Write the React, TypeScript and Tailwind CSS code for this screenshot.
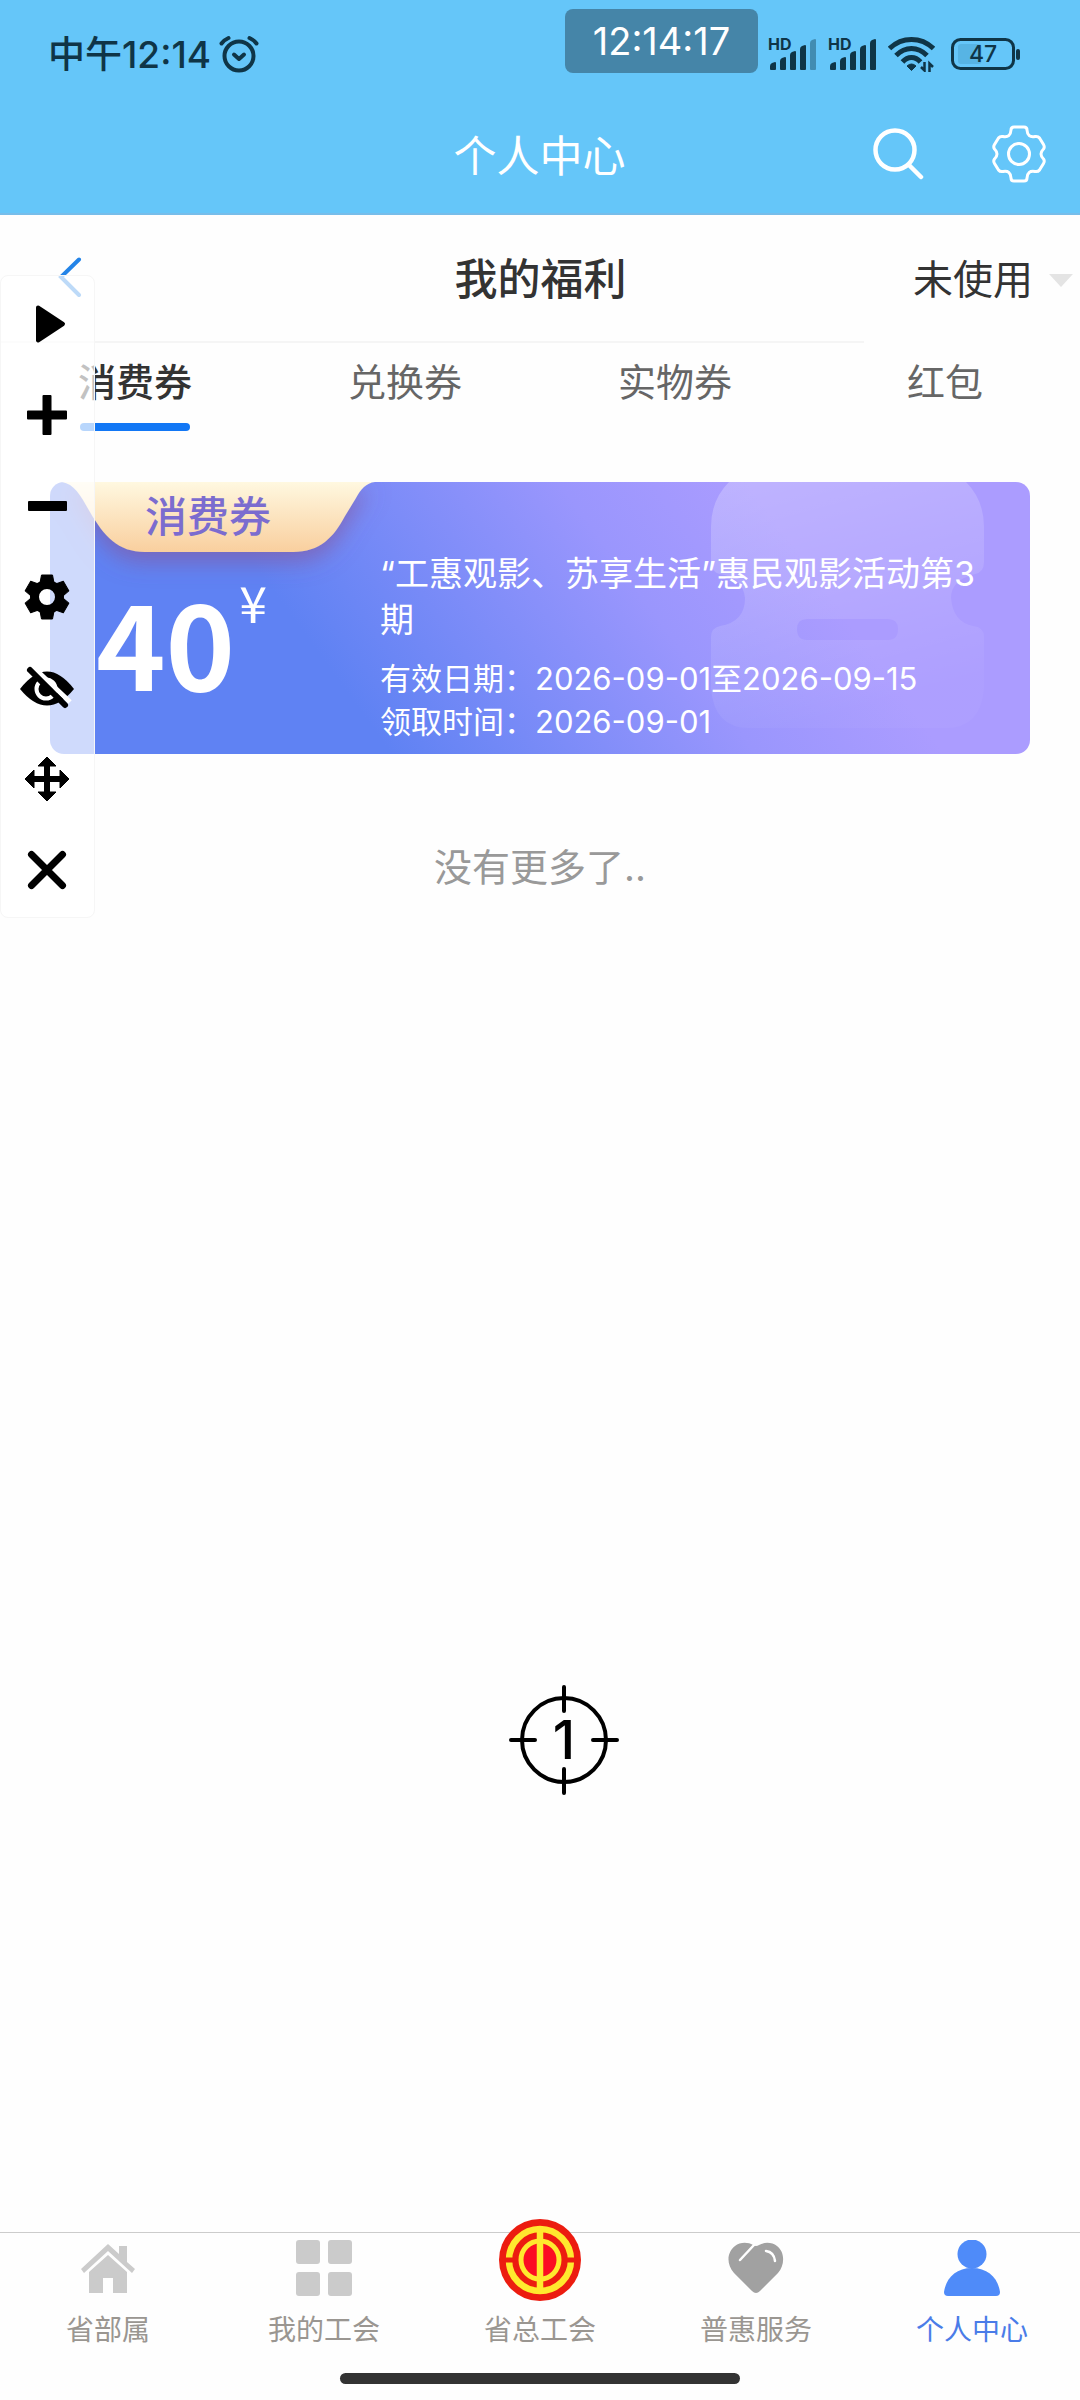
import { useState } from "react";
import type { ReactNode } from "react";
import clsx from "clsx";

const TABS = ["消费券", "兑换券", "实物券", "红包"];

const STATUS_OPTIONS = ["未使用", "已使用", "已过期"];

function AlarmIcon() {
  return (
    <svg width="40" height="38" viewBox="0 0 40 38" fill="none" stroke="#0f3547" strokeWidth="4" strokeLinecap="round">
      <circle cx="20" cy="21" r="14.5" />
      <path d="M15 19.5l5 4.5 5-4.5" strokeLinejoin="round" />
      <path d="M2.5 8.5Q5 5 9.5 3M37.5 8.5Q35 5 30.5 3" />
    </svg>
  );
}

function SignalIcon({ level }: { level: number }) {
  const heights = [8, 13, 19, 25, 31];
  return (
    <svg
      className="overflow-visible"
      width="51"
      height="38"
      viewBox="0 -2 51 38"
      fill="#0f3547"
      aria-label="HD"
    >
      <text x="0" y="13" fontSize="16" fontWeight="700" fontFamily="Inter, sans-serif">
        HD
      </text>
      {heights.map((h, i) => (
        <path
          key={h}
          d={`M${2 + i * 10} ${37 - h}q0 -2 2 -3l3 -1q1 0 1 1V32q0 1 -1 1h-4q-1 0 -1 -1z`}
          opacity={i < level ? 1 : 0.4}
        />
      ))}
    </svg>
  );
}

function WifiIcon() {
  return (
    <svg width="47" height="36" viewBox="0 0 47 36" fill="none" stroke="#0f3547" strokeWidth="5">
      <path d="M1.5 12.5Q11 3.5 23.5 3.5T45.5 12.5" />
      <path d="M8 19.5Q15 12.5 23.5 12.5T39 19.5" />
      <path d="M14.5 26Q18.5 21.5 23.5 21.5T32.5 26" />
      <path d="M19 30q4.5 -4 9 0l-4.5 4.5z" fill="#0f3547" strokeWidth="1" strokeLinejoin="round" />
      <path d="M36.5 26v8.5l-3.5 -3.5M41.5 36v-8.5l3.5 3.5" strokeWidth="2.5" />
    </svg>
  );
}

function BatteryIcon({ percent }: { percent: number }) {
  return (
    <svg width="70" height="32" viewBox="0 0 70 32" aria-label="battery">
      <rect x="1.5" y="1.5" width="61" height="29" rx="8" fill="none" stroke="#0f3547" strokeWidth="3" />
      <rect x="7" y="6" width={(50 * percent) / 100} height="20" rx="3" fill="#57b4e4" />
      <rect x="65" y="11" width="4" height="11" rx="2" fill="#0f3547" />
      <text x="32" y="24" textAnchor="middle" fontSize="23" fontWeight="500" fontFamily="Inter, sans-serif" fill="#0f3547">
        {percent}
      </text>
    </svg>
  );
}

function SearchIcon() {
  return (
    <svg width="52" height="52" viewBox="0 0 52 52" fill="none" stroke="white" strokeWidth="4.5" strokeLinecap="round">
      <circle cx="22" cy="22" r="19.5" />
      <path d="M36 37l12 12" />
    </svg>
  );
}

function SettingsIcon() {
  return (
    <svg width="56" height="58" viewBox="-28 -29 56 58" fill="none" stroke="white" strokeWidth="3" strokeLinejoin="round">
      <path d="M-5 -27H5Q8 -27 8 -24Q8.5 -16 16 -17.5Q19 -18 20.5 -16L24.5 -9.5Q26 -7 24.5 -5Q19.5 0 24.5 5Q26 7 24.5 9.5L20.5 16Q19 18 16 17.5Q8.5 16 8 24Q8 27 5 27H-5Q-8 27 -8 24Q-8.5 16 -16 17.5Q-19 18 -20.5 16L-24.5 9.5Q-26 7 -24.5 5Q-19.5 0 -24.5 -5Q-26 -7 -24.5 -9.5L-20.5 -16Q-19 -18 -16 -17.5Q-8.5 -16 -8 -24Q-8 -27 -5 -27Z" />
      <circle r="10.5" />
    </svg>
  );
}

function ToolIcon({ children }: { children: ReactNode }) {
  return (
    <svg width="60" height="60" viewBox="-30 -30 60 60" fill="black" stroke="black" strokeLinejoin="round">
      {children}
    </svg>
  );
}

const TOOLS = [
  {
    label: "play",
    icon: <path d="M-9 -16.5L16 0L-9 16.5Z" strokeWidth="4" />,
  },
  {
    label: "add",
    icon: <path d="M-3.5 -19h7v15.5h15.5v7h-15.5v15.5h-7v-15.5h-15.5v-7h15.5z" strokeWidth="2" />,
  },
  {
    label: "remove",
    icon: <rect x="-18" y="-4" width="37" height="8" strokeWidth="2" />,
  },
  {
    label: "settings",
    icon: (
      <>
        <circle r="12.5" fill="none" strokeWidth="9" />
        {[0, 60, 120, 180, 240, 300].map((deg) => (
          <path key={deg} transform={`rotate(${deg})`} d="M-7 -14L-5.5 -22H5.5L7 -14Z" strokeWidth="1" />
        ))}
      </>
    ),
  },
  {
    label: "hide",
    icon: (
      <>
        <path d="M-27 1Q0 -34 27 1Q0 34 -27 1Z" stroke="none" />
        <circle r="9.5" cy="1" cx="-1" fill="none" stroke="white" strokeWidth="4" />
        <path d="M-14 -21L23 14" stroke="white" strokeWidth="5" />
        <path d="M-17 -18L18 17" strokeWidth="6" strokeLinecap="round" />
      </>
    ),
  },
  {
    label: "move",
    icon: (
      <>
        <path d="M0 -15V15M-15 0H15" strokeWidth="6" />
        <path
          d="M0 -22L9 -13H-9ZM0 22L9 13H-9ZM-22 0L-13 -9V9ZM22 0L13 -9V9Z"
          strokeWidth="1"
        />
      </>
    ),
  },
  {
    label: "close",
    icon: <path d="M-15.5 -15.5L15.5 15.5M15.5 -15.5L-15.5 15.5" strokeWidth="7" strokeLinecap="round" />,
  },
];

function Emblem() {
  return (
    <svg width="84" height="84" viewBox="-42 -42 84 84" fill="none">
      <circle r="41" fill="#ec1c10" />
      <circle r="31" stroke="#ffe92e" strokeWidth="6.5" />
      <path d="M-35 0H-24M24 0H35" stroke="#ec1c10" strokeWidth="5" />
      <circle r="19" fill="#fb0d23" stroke="#ffe92e" strokeWidth="5" />
      <path d="M0 -30V30" stroke="#ffe92e" strokeWidth="6.5" />
    </svg>
  );
}

const NAV_ITEMS = [
  {
    label: "省部属",
    icon: (
      <svg width="56" height="56" viewBox="0 0 56 56" fill="#cbcbcb">
        <path d="M28 4L39 14V6h8v16l8 7-3 4L28 11 4 33l-3-4z" />
        <path d="M28 15L47 32V53H33V38H23V53H9V32z" />
      </svg>
    ),
  },
  {
    label: "我的工会",
    icon: (
      <svg width="56" height="56" viewBox="0 0 56 56" fill="#cbcbcb">
        <rect width="24" height="24" rx="3" />
        <rect x="32" width="24" height="24" rx="3" />
        <rect y="32" width="24" height="24" rx="3" />
        <rect x="32" y="32" width="24" height="24" rx="3" />
      </svg>
    ),
  },
  { label: "省总工会", icon: <Emblem /> },
  {
    label: "普惠服务",
    icon: (
      <svg width="56" height="56" viewBox="0 0 56 56" fill="#a1a1a1">
        <path d="M24 51L6 33C-2 24 -1 12 7 6C12 2 20 2 25 5Q28 7 31 5C36 2 44 2 49 6C57 12 57 25 50 33L32 51Q28 55 24 51Z" />
        <path d="M26 5L12 20" stroke="white" strokeWidth="2.5" strokeLinecap="round" />
        <path d="M38 11Q46 12 47 21" stroke="white" strokeWidth="2.5" strokeLinecap="round" fill="none" />
      </svg>
    ),
  },
  {
    label: "个人中心",
    icon: (
      <svg width="56" height="56" viewBox="0 0 56 56" fill="#4f8bf9">
        <circle cx="28" cy="14" r="14.5" />
        <path d="M0 52C2 38 12 28 28 28S54 38 56 52Q56 56 52 56H4Q0 56 0 52Z" />
      </svg>
    ),
  },
];

function StatusBar() {
  return (
    <div className="relative flex h-[95px] items-center justify-between pt-[13px] pr-[59px] pl-12">
      <div className="flex items-center gap-2 text-[37px] leading-none font-medium text-[#0f3547]">
        <span>中午12:14</span>
        <AlarmIcon />
      </div>
      <div className="flex items-center gap-4">
        <div className="flex items-center gap-[9px]">
          <SignalIcon level={4} />
          <SignalIcon level={5} />
          <WifiIcon />
        </div>
        <BatteryIcon percent={47} />
      </div>
      {/* Floating clock */}
      <div className="absolute top-[9px] left-[565px] flex h-16 w-[193px] items-center justify-center rounded-lg bg-[#4585a8] text-[38px] leading-none text-white">
        12:14:17
      </div>
    </div>
  );
}

function Coupon() {
  return (
    <article className="relative mx-[50px] mt-[51px] grid min-h-[272px] grid-cols-[330px_1fr] overflow-hidden rounded-[14px] bg-[linear-gradient(54deg,#5f82f3_29%,#9a96fd_60%,#ab9cff_76%)] text-white">
      <svg className="absolute top-0 right-[46px]" width="273" height="246" viewBox="0 0 273 246">
        <defs>
          <linearGradient id="ticket" x1="0" y1="0" x2="0.3" y2="1">
            <stop offset="0" stopColor="white" stopOpacity="0.24" />
            <stop offset="1" stopColor="white" stopOpacity="0.03" />
          </linearGradient>
        </defs>
        <path
          d="M18 0H255Q273 18 273 45V80Q273 90 264 92Q240 98 240 116Q242 140 262 144Q273 145 273 155V206Q270 246 235 246H38Q3 246 0 206V155Q0 146 9 144Q34 140 34 116Q32 96 9 92Q0 90 0 80V45Q0 18 18 0ZM96 137Q86 137 86 147Q86 158 96 158H177Q187 158 187 147Q187 137 177 137Z"
          fill="url(#ticket)"
          fillRule="evenodd"
        />
      </svg>

      <div className="relative">
        <div className="relative h-[70px] pl-[95px]">
          <svg className="absolute top-0 left-0 overflow-visible" width="330" height="70" viewBox="0 0 330 70">
            <defs>
              <linearGradient id="ribbon" x1="0" y1="0" x2="0" y2="1">
                <stop offset="0" stopColor="#fff8e0" />
                <stop offset="1" stopColor="#f9cf9e" />
              </linearGradient>
              <filter id="ribbonShadow" x="-20%" y="-20%" width="140%" height="200%">
                <feDropShadow dx="0" dy="10" stdDeviation="11" floodColor="#8a5090" floodOpacity="0.55" />
              </filter>
            </defs>
            <path
              d="M12 0C24 2 30 12 40 30C54 54 68 70 95 70H243C270 70 284 55 295 34L306 16C311 7 316 1 325 0Z"
              fill="url(#ribbon)"
              filter="url(#ribbonShadow)"
            />
          </svg>
          <h2 className="relative text-[42px] leading-[70px] font-medium text-[#7b6ccf]">消费券</h2>
        </div>
        <div className="mt-7 flex items-start gap-1 pl-[46px] font-['Noto_Sans_CJK_SC',sans-serif]">
          <span className="text-[118px] leading-[120px] font-bold">40</span>
          <span className="text-[50px] leading-[42px]">¥</span>
        </div>
      </div>

      <div className="relative pt-[69px] pr-10">
        <h3 className="text-[34px] leading-[46px]">“工惠观影、苏享生活”惠民观影活动第3期</h3>
        <div className="mt-3.5 text-[31px] leading-[43px]">
          <p>有效日期：2026-09-01至2026-09-15</p>
          <p>领取时间：2026-09-01</p>
        </div>
      </div>
    </article>
  );
}

export default function App() {
  const [activeTab, setActiveTab] = useState(TABS[0]);
  const [status, setStatus] = useState(STATUS_OPTIONS[0]);

  return (
    <div className="relative flex min-h-screen flex-col bg-[#fefefe] font-['Inter','Noto_Sans_CJK_SC',sans-serif] text-[#333]">
      <header className="border-b-2 border-[#77bdea] bg-[#65c6f9]">
        <StatusBar />
        <div className="grid h-[118px] grid-cols-[1fr_auto_1fr] items-center pr-[33px]">
          <h1 className="col-start-2 pt-1 pl-8 text-[43px] leading-none text-white">个人中心</h1>
          <div className="flex items-center justify-end gap-[66px]">
            <button type="button" aria-label="search">
              <SearchIcon />
            </button>
            <button type="button" aria-label="settings">
              <SettingsIcon />
            </button>
          </div>
        </div>
      </header>

      <main className="flex-grow">
        {/* Page title */}
        <div className="grid h-[126px] grid-cols-[1fr_auto_1fr] items-center pr-[7px]">
          <button type="button" aria-label="back" className="ml-[58px] w-6">
            <svg width="24" height="42" viewBox="0 0 24 42" fill="none" stroke="#2384e8" strokeWidth="4" strokeLinecap="round">
              <path d="M21 2.5L3 20l18 18" />
            </svg>
          </button>
          <h2 className="pt-0.5 pl-2 text-[43px] leading-none font-medium">我的福利</h2>
          <div className="flex items-center justify-end gap-4 pt-1">
            <select
              aria-label="status"
              value={status}
              onChange={(e) => setStatus(e.target.value)}
              className="w-[120px] appearance-none bg-transparent text-[40px] leading-[52px] outline-none"
            >
              {STATUS_OPTIONS.map((option) => (
                <option key={option}>{option}</option>
              ))}
            </select>
            <svg width="24" height="13" viewBox="0 0 24 13" fill="#e4e4e4">
              <path d="M0 0H24L12 13Z" />
            </svg>
          </div>
        </div>
        <hr className="w-4/5 border-t-2 border-[#f5f5f5]" />

        {/* Tabs */}
        <div role="tablist" className="grid grid-cols-4">
          {TABS.map((tab) => (
            <button
              key={tab}
              type="button"
              role="tab"
              aria-selected={tab === activeTab}
              onClick={() => setActiveTab(tab)}
              className={clsx(
                "flex h-[88px] flex-col items-center justify-between text-[38px] leading-[78px]",
                tab === activeTab ? "font-medium text-[#333]" : "text-[#666]"
              )}
            >
              {tab}
              {tab === activeTab && <span className="h-2 w-[110px] rounded-full bg-[#1277f5]" />}
            </button>
          ))}
        </div>

        <Coupon />

        <p className="mt-[85px] text-center text-[38px] leading-[56px] text-[#999]">没有更多了..</p>
      </main>

      <nav className="flex h-[168px] flex-col justify-between border-t border-[#ccc] pb-4">
        <div className="grid grid-cols-5">
          {NAV_ITEMS.map((item) => (
            <a key={item.label} href="#" className="flex flex-col items-center">
              <span className="flex h-[70px] items-center justify-center">
                {item.label === "省总工会" ? <span className="-mt-4">{item.icon}</span> : item.icon}
              </span>
              <span
                className={clsx(
                  "mt-1 text-[28px] leading-[46px]",
                  item.label === "个人中心" ? "text-[#4a7ce8]" : "text-[#9a9691]"
                )}
              >
                {item.label}
              </span>
            </a>
          ))}
        </div>
        <div className="mx-auto h-[11px] w-[400px] rounded-full bg-[#333]" />
      </nav>

      {/* Floating toolbar */}
      <div className="absolute top-[275px] left-0 flex w-[95px] flex-col rounded-lg border border-[#f6f6f6] bg-white/70 py-0.5 pr-0.5">
        {TOOLS.map((tool) => (
          <button key={tool.label} type="button" aria-label={tool.label} className="flex h-[91px] items-center justify-center">
            <ToolIcon>{tool.icon}</ToolIcon>
          </button>
        ))}
      </div>

      {/* Click target marker */}
      <div className="absolute top-[1684px] left-[508px] flex h-28 w-28 items-center justify-center">
        <svg className="absolute inset-0" width="112" height="112" viewBox="-56 -56 112 112" fill="none" stroke="black" strokeWidth="4">
          <circle r="42" />
          <path d="M0 -53V-29M0 29V53M-53 0H-29M29 0H53" strokeLinecap="round" />
        </svg>
        <span className="relative text-[54px] leading-none font-medium text-black">1</span>
      </div>
    </div>
  );
}
